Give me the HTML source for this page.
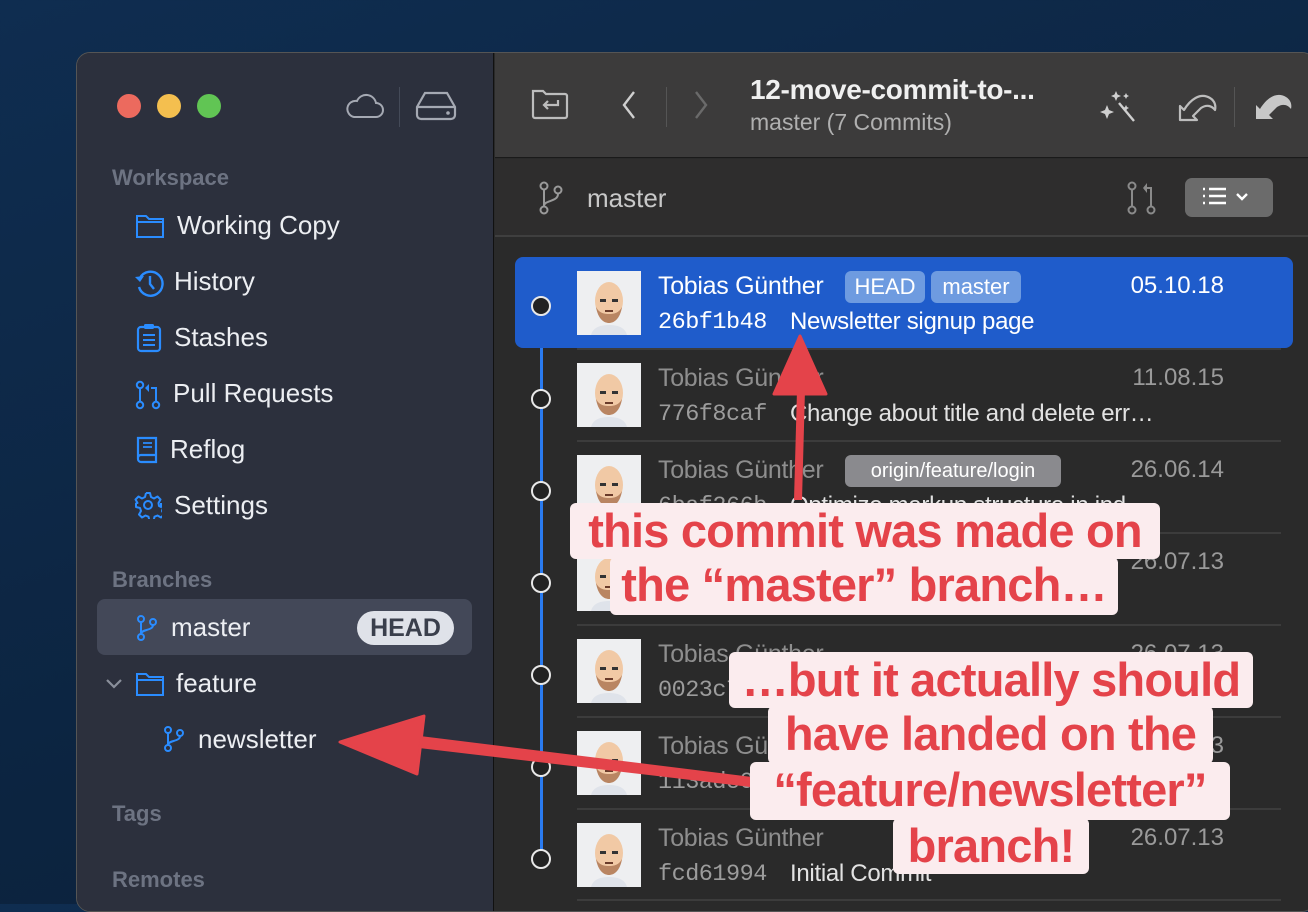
<!DOCTYPE html>
<html><head><meta charset="utf-8"><style>
*{margin:0;padding:0;box-sizing:border-box}
body{width:1308px;height:904px;overflow:hidden;background:linear-gradient(160deg,#0f2d50 0%,#0c2440 60%,#0a1f38 100%);font-family:"Liberation Sans",sans-serif;position:relative}
.a{position:absolute;white-space:nowrap}
#win{position:absolute;left:76px;top:52px;width:1240px;height:860px;border-radius:14px;overflow:hidden;background:#2a2a2a;border:1px solid #555}
.side{position:absolute;left:0;top:0;width:417px;height:100%;background:#2c303d;border-right:1px solid #111}
.lbl{color:#6d7382;font-size:22px;font-weight:bold}
.it{color:#eceef2;font-size:26px}
.mono{font-family:"Liberation Mono",monospace}
.ann{position:absolute;background:#fbecee;color:#e4434a;font-weight:bold;font-size:47px;line-height:56px;border-radius:6px;text-align:center;letter-spacing:-0.8px}
</style></head><body>
<div id="win">
 <div class="side">
  <div class="a" style="left:40px;top:41px;width:24px;height:24px;border-radius:50%;background:#ec6a5e"></div>
  <div class="a" style="left:80px;top:41px;width:24px;height:24px;border-radius:50%;background:#f4bf4f"></div>
  <div class="a" style="left:120px;top:41px;width:24px;height:24px;border-radius:50%;background:#61c554"></div>
  <svg class="a" style="left:268px;top:36px" width="40" height="32" viewBox="0 0 40 32"><path d="M9 28h22a7 7 0 0 0 0-14 10 10 0 0 0-19-2 8 8 0 0 0-3 16z" fill="none" stroke="#a5a9b3" stroke-width="2"/></svg>
  <div class="a" style="left:322px;top:34px;width:1px;height:40px;background:#444a58"></div>
  <svg class="a" style="left:338px;top:38px" width="42" height="30" viewBox="0 0 42 30"><path d="M10 2h22l8 14v8a4 4 0 0 1-4 4H6a4 4 0 0 1-4-4v-8z M2 16h38" fill="none" stroke="#a5a9b3" stroke-width="2.2"/><circle cx="33" cy="22" r="1.8" fill="#a5a9b3"/></svg>
  <div class="a lbl" style="left:35px;top:112px">Workspace</div>
  <svg class="a" style="left:58px;top:160px" width="30" height="26" viewBox="0 0 30 26"><path d="M2 3h9l3 3h14v18H2z M2 9h26" fill="none" stroke="#2a8cff" stroke-width="2"/></svg>
  <div class="a it" style="left:100px;top:157px">Working Copy</div>
  <svg class="a" style="left:57px;top:215px" width="30" height="30" viewBox="0 0 30 30"><path d="M6 10a12 12 0 1 1-1 9" fill="none" stroke="#2a8cff" stroke-width="2.4"/><path d="M1 9l5 5 4-6z" fill="#2a8cff"/><path d="M16 8v8l4 5" fill="none" stroke="#2a8cff" stroke-width="2.4"/></svg>
  <div class="a it" style="left:97px;top:213px">History</div>
  <svg class="a" style="left:59px;top:270px" width="26" height="30" viewBox="0 0 26 30"><rect x="2" y="4" width="22" height="24" rx="3" fill="none" stroke="#2a8cff" stroke-width="2.2"/><rect x="8" y="1" width="10" height="5" rx="1.5" fill="#2a8cff"/><path d="M7 12h12M7 17h12M7 22h12" stroke="#2a8cff" stroke-width="2"/></svg>
  <div class="a it" style="left:97px;top:269px">Stashes</div>
  <svg class="a" style="left:58px;top:327px" width="26" height="30" viewBox="0 0 26 30"><circle cx="5" cy="25" r="3.2" fill="none" stroke="#2a8cff" stroke-width="2"/><circle cx="5" cy="5" r="3.2" fill="none" stroke="#2a8cff" stroke-width="2"/><circle cx="21" cy="25" r="3.2" fill="none" stroke="#2a8cff" stroke-width="2"/><path d="M5 8v14M21 22V8h-5" fill="none" stroke="#2a8cff" stroke-width="2"/><path d="M14 4l-4 4 4 4z" fill="#2a8cff"/></svg>
  <div class="a it" style="left:96px;top:325px">Pull Requests</div>
  <svg class="a" style="left:58px;top:382px" width="24" height="30" viewBox="0 0 24 30"><path d="M3 3h18v24H6a3 3 0 0 1-3-3z M3 23a3 3 0 0 1 3-3h15" fill="none" stroke="#2a8cff" stroke-width="2.2"/><path d="M8 8h9M8 12h9" stroke="#2a8cff" stroke-width="1.8"/></svg>
  <div class="a it" style="left:93px;top:381px">Reflog</div>
  <svg class="a" style="left:57px;top:438px" width="28" height="28" viewBox="0 0 28 28"><circle cx="14" cy="14" r="4" fill="none" stroke="#2a8cff" stroke-width="2"/><path d="M12 2h4l1 4 3 1.5 3.5-2 3 3-2 3.5L25 15l2 1v-4 M12 2l-1 4-3 1.5-3.5-2-3 3 2 3.5L3 12l-1 .5v3.5l4 1 1 3-2 3.5 3 3 3.5-2 3 1.2 1 4h4l1-4 3-1.2 3.5 2 3-3-2-3.5 1-3 4-1v-4l-4-1" fill="none" stroke="#2a8cff" stroke-width="2" stroke-linejoin="round"/></svg>
  <div class="a it" style="left:97px;top:437px">Settings</div>
  <div class="a lbl" style="left:35px;top:514px">Branches</div>
  <div class="a" style="left:20px;top:546px;width:375px;height:56px;border-radius:8px;background:#434858"></div>
  <svg class="a" style="left:59px;top:561px" width="22" height="28" viewBox="0 0 22 28"><circle cx="5" cy="5" r="3" fill="none" stroke="#2a8cff" stroke-width="2"/><circle cx="17" cy="8" r="3" fill="none" stroke="#2a8cff" stroke-width="2"/><circle cx="5" cy="23" r="3" fill="none" stroke="#2a8cff" stroke-width="2"/><path d="M5 8v12M17 11c0 6-12 4-12 9" fill="none" stroke="#2a8cff" stroke-width="2"/></svg>
  <div class="a it" style="left:94px;top:559px">master</div>
  <div class="a" style="left:280px;top:558px;width:97px;height:34px;border-radius:17px;background:#dfe2e9;color:#3a3f4c;font-weight:bold;font-size:25px;text-align:center;line-height:34px">HEAD</div>
  <svg class="a" style="left:27px;top:624px" width="20" height="14" viewBox="0 0 20 14"><path d="M3 3l7 7 7-7" fill="none" stroke="#8a8f9b" stroke-width="2.2"/></svg>
  <svg class="a" style="left:58px;top:618px" width="30" height="26" viewBox="0 0 30 26"><path d="M2 3h9l3 3h14v18H2z M2 9h26" fill="none" stroke="#2a8cff" stroke-width="2"/></svg>
  <div class="a it" style="left:99px;top:615px">feature</div>
  <svg class="a" style="left:86px;top:672px" width="22" height="28" viewBox="0 0 22 28"><circle cx="5" cy="5" r="3" fill="none" stroke="#2a8cff" stroke-width="2"/><circle cx="17" cy="8" r="3" fill="none" stroke="#2a8cff" stroke-width="2"/><circle cx="5" cy="23" r="3" fill="none" stroke="#2a8cff" stroke-width="2"/><path d="M5 8v12M17 11c0 6-12 4-12 9" fill="none" stroke="#2a8cff" stroke-width="2"/></svg>
  <div class="a it" style="left:121px;top:671px">newsletter</div>
  <div class="a lbl" style="left:35px;top:748px">Tags</div>
  <div class="a lbl" style="left:35px;top:814px">Remotes</div>
 </div>
 <div class="a" style="left:418px;top:0;width:822px;height:105px;background:#3c3b3b;border-bottom:1px solid #1a1a1a"></div>
 <svg class="a" style="left:453px;top:34px" width="40" height="34" viewBox="0 0 40 34"><path d="M3 4h10l3 3h19a2 2 0 0 1 2 2v20a2 2 0 0 1-2 2H5a2 2 0 0 1-2-2z" fill="none" stroke="#bdbdbd" stroke-width="2.2"/><path d="M28 13v5H14M18 14l-4 4 4 4" fill="none" stroke="#bdbdbd" stroke-width="2.2"/></svg>
 <svg class="a" style="left:542px;top:36px" width="20" height="32" viewBox="0 0 20 32"><path d="M15 3L5 16l10 13" fill="none" stroke="#cfcfcf" stroke-width="2.4"/></svg>
 <div class="a" style="left:589px;top:34px;width:1px;height:40px;background:#555"></div>
 <svg class="a" style="left:614px;top:36px" width="20" height="32" viewBox="0 0 20 32"><path d="M5 3l10 13L5 29" fill="none" stroke="#6a6a6a" stroke-width="2.4"/></svg>
 <div class="a" style="left:673px;top:21px;color:#f0f0f0;font-size:28px;font-weight:bold;letter-spacing:-0.3px">12-move-commit-to-...</div>
 <div class="a" style="left:673px;top:56px;color:#b0b0b0;font-size:23px">master (7 Commits)</div>
 <svg class="a" style="left:1022px;top:34px" width="40" height="38" viewBox="0 0 40 38"><path d="M20 16l15 18" stroke="#cfcfcf" stroke-width="2.4"/><path d="M8 18l2 5 5 2-5 2-2 5-2-5-5-2 5-2z M17 4l1.5 3.5L22 9l-3.5 1.5L17 14l-1.5-3.5L12 9l3.5-1.5z M27 6l1 2 2 1-2 1-1 2-1-2-2-1 2-1z M27 18l1 2 2 1-2 1-1 2-1-2-2-1 2-1z" fill="#cfcfcf"/></svg>
 <svg class="a" style="left:1100px;top:34px" width="44" height="36" viewBox="0 0 44 36"><path d="M3 33V19l4 4c6-10 16-18 26-12 5 3 6 8 5 12-3-4-8-6-14-2l-8 8 4 4z" fill="none" stroke="#bdbdbd" stroke-width="2.2" stroke-linejoin="round"/></svg>
 <div class="a" style="left:1157px;top:34px;width:1px;height:40px;background:#555"></div>
 <svg class="a" style="left:1176px;top:36px" width="44" height="34" viewBox="0 0 44 34"><path d="M3 30V16l4 4c6-10 16-18 26-12 5 3 6 8 5 12-3-4-8-6-14-2l-8 8 4 4z" fill="#c8c8c8"/></svg>
 <div class="a" style="left:418px;top:106px;width:822px;height:78px;background:#2e2d2d;border-bottom:2px solid #3f3f3f"></div>
 <svg class="a" style="left:462px;top:128px" width="24" height="34" viewBox="0 0 24 34"><circle cx="5" cy="5" r="3.5" fill="none" stroke="#9a9a9a" stroke-width="2"/><circle cx="19" cy="9" r="3.5" fill="none" stroke="#9a9a9a" stroke-width="2"/><circle cx="5" cy="29" r="3.5" fill="none" stroke="#9a9a9a" stroke-width="2"/><path d="M5 9v16M19 13c0 8-14 6-14 12" fill="none" stroke="#9a9a9a" stroke-width="2"/></svg>
 <div class="a" style="left:510px;top:130px;color:#c8c8c8;font-size:26px">master</div>
 <svg class="a" style="left:1050px;top:128px" width="32" height="34" viewBox="0 0 32 34"><circle cx="5" cy="5" r="3.5" fill="none" stroke="#8a8a8a" stroke-width="2"/><circle cx="5" cy="29" r="3.5" fill="none" stroke="#8a8a8a" stroke-width="2"/><circle cx="24" cy="29" r="3.5" fill="none" stroke="#8a8a8a" stroke-width="2"/><path d="M5 9v16M24 25V7h-4" fill="none" stroke="#8a8a8a" stroke-width="2"/><path d="M20 2l-4 5 4 5z" fill="#8a8a8a"/></svg>
 <div class="a" style="left:1108px;top:125px;width:88px;height:39px;border-radius:7px;background:#6b6b6b"></div>
 <svg class="a" style="left:1124px;top:133px" width="60" height="22" viewBox="0 0 60 22"><path d="M2 3h2M2 10h2M2 17h2M8 3h17M8 10h17M8 17h17" stroke="#fff" stroke-width="2.4"/><path d="M36 8l5 5 5-5" fill="none" stroke="#fff" stroke-width="2.4"/></svg>
 <div id="rows"></div>
</div>
<script>
var R=[["Tobias Günther",["HEAD","master"],"05.10.18","26bf1b48","Newsletter signup page"],
["Tobias Günther",[],"11.08.15","776f8caf","Change about title and delete err…"],
["Tobias Günther",["origin/feature/login"],"26.06.14","6baf266b","Optimize markup structure in ind…"],
["Tobias Günther",[],"26.07.13","3a9e01d2","Add styles for footer and i…"],
["Tobias Günther",[],"26.07.13","0023c7a1","Add basic layout"],
["Tobias Günther",[],"26.07.13","113adc09","Add index page"],
["Tobias Günther",[],"26.07.13","fcd61994","Initial Commit"]];
var h='';var ox=76,oy=52;
h+='<div class="a" style="left:'+(540-ox-1.5)+'px;top:'+(305-oy)+'px;width:3px;height:553px;background:#2a7bf0"></div>';
for(var i=0;i<7;i++){var y=256+92*i-oy,sel=i==0,r=R[i];
 if(sel)h+='<div class="a" style="left:'+(514-ox)+'px;top:'+y+'px;width:778px;height:91px;border-radius:8px;background:#1f5ccb"></div>';
 else h+='<div class="a" style="left:'+(576-ox)+'px;top:'+(y-1)+'px;width:704px;height:2px;background:#3c3c3c"></div>';
 var cy=[305,398,490,582,674,766,858][i]-oy;
 h+='<div class="a" style="left:'+(530-ox)+'px;top:'+(cy-10)+'px;width:20px;height:20px;border-radius:50%;border:2.5px solid #e8e8e8;background:#222"></div>';
 h+='<svg class="a" style="left:'+(576-ox)+'px;top:'+(y+14)+'px" width="64" height="64" viewBox="0 0 64 64"><rect width="64" height="64" fill="#eeeff1"/><path d="M14 64c2-8 10-10 18-10s16 2 18 10z" fill="#dfe3ea"/><ellipse cx="32" cy="30" rx="14" ry="19" fill="#f1c9a5"/><path d="M19 36c2 12 8 16 13 16s11-4 13-16c-3 6-8 7-13 7s-10-1-13-7z" fill="#b98562"/><rect x="23" y="28" width="6" height="3" fill="#333"/><rect x="35" y="28" width="6" height="3" fill="#333"/><path d="M28 40h8" stroke="#6a3b2a" stroke-width="2"/></svg>';
 var nc=sel?'#fff':'#8e8e8e',dc=sel?'#fff':'#9a9a9a',hc=sel?'#fff':'#9c9c9c',mc=sel?'#fff':'#e2e2e2';
 h+='<div class="a" style="left:'+(657-ox)+'px;top:'+(y+15)+'px;font-size:25px;letter-spacing:-0.3px;color:'+nc+'">'+r[0]+'</div>';
 var bx=844;for(var k=0;k<r[1].length;k++){var t=r[1][k];var w=216;if(t=="HEAD")w=80;if(t=="master")w=90;
  h+='<div class="a" style="left:'+(bx-ox)+'px;top:'+(y+14)+'px;height:32px;width:'+w+'px;line-height:32px;text-align:center;border-radius:6px;font-size:'+(w==216?20:22)+'px;color:#fff;background:'+(sel?'#6e9be0':'#8a8a8e')+'">'+t+'</div>';bx+=w+6;}
 h+='<div class="a" style="left:'+(1100-ox)+'px;width:123px;text-align:right;top:'+(y+15)+'px;font-size:24px;color:'+dc+'">'+r[2]+'</div>';
 h+='<div class="a mono" style="left:'+(657-ox)+'px;top:'+(y+52)+'px;font-size:23.5px;letter-spacing:-0.5px;color:'+hc+'">'+r[3]+'</div>';
 h+='<div class="a" style="left:'+(789-ox)+'px;top:'+(y+51)+'px;font-size:24px;letter-spacing:-0.3px;color:'+mc+'">'+r[4]+'</div>';
}
h+='<div class="a" style="left:'+(576-ox)+'px;top:'+(898-oy)+'px;width:704px;height:2px;background:#3c3c3c"></div>';
document.getElementById('rows').innerHTML=h;
</script>
<svg class="a" style="left:0;top:0" width="1308" height="904"><path d="M794 500L797 390h8L802 500z" fill="#e4434a"/><path d="M800 336L774 394h52z" fill="#e4434a" stroke="#e4434a" stroke-linejoin="round" stroke-width="3"/><path d="M420 736L760 778l-1 10L419 748z" fill="#e4434a"/><path d="M340 742L424 716l-7 58z" fill="#e4434a" stroke="#e4434a" stroke-linejoin="round" stroke-width="3"/></svg>
<div class="ann" style="left:570px;top:503px;width:590px;height:56px">this commit was made on</div>
<div class="ann" style="left:610px;top:557px;width:508px;height:58px">the “master” branch…</div>
<div class="ann" style="left:729px;top:652px;width:524px;height:56px">…but it actually should</div>
<div class="ann" style="left:768px;top:706px;width:445px;height:58px">have landed on the</div>
<div class="ann" style="left:750px;top:762px;width:480px;height:58px">“feature/newsletter”</div>
<div class="ann" style="left:893px;top:818px;width:196px;height:56px">branch!</div>
</body></html>
